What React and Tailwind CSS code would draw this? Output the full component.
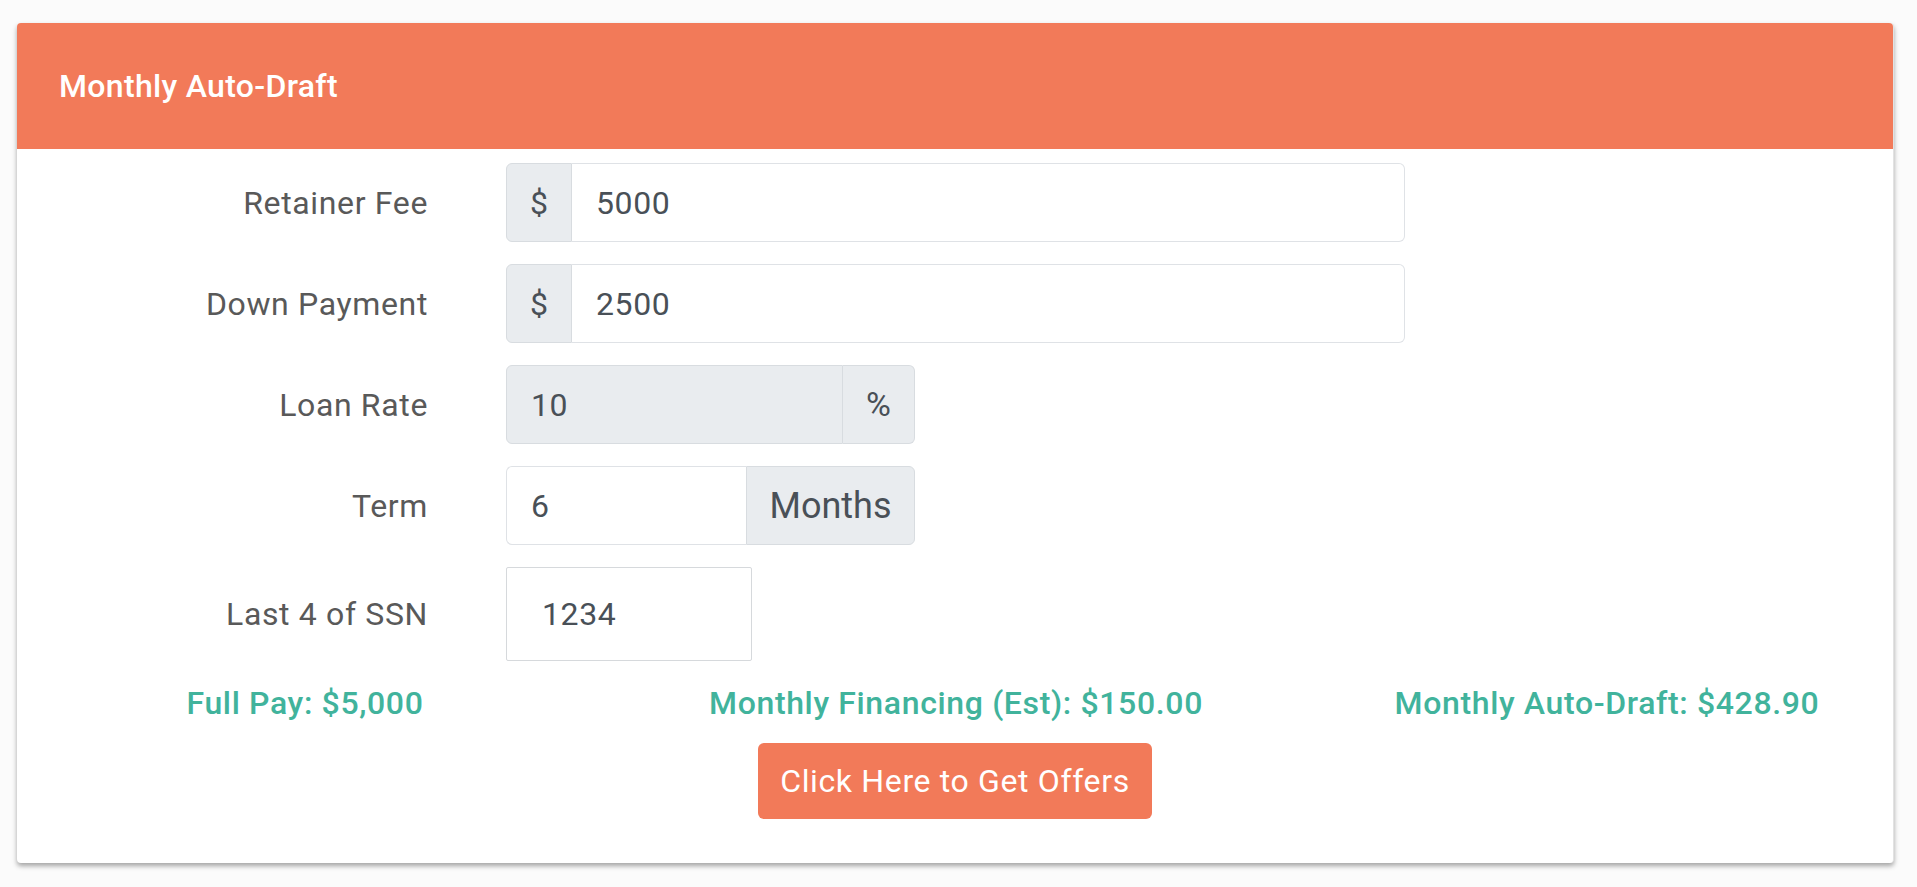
import React from 'react';

const font = "font-['Roboto','Liberation_Sans',sans-serif]";

const Label = ({ children }) => (
  <div className="w-[411px] shrink-0 text-right text-[32px] tracking-[0.02em] text-[#595959]">
    {children}
  </div>
);

const Row = ({ label, children }) => (
  <div className="flex items-center gap-[78px]">
    <Label>{label}</Label>
    {children}
  </div>
);

const DollarField = ({ value }) => (
  <div className="flex h-[79px] w-[899px]">
    <span className="flex w-[66px] items-center justify-center rounded-l-[6px] border border-[#d8dce0] bg-[#e9ecef] text-[32px] text-[#495057]">
      $
    </span>
    <div className="flex flex-1 items-center rounded-r-[6px] border border-l-0 border-[#dfe2e6] bg-white pl-[24px] text-[32px] tracking-[0.02em] text-[#495057]">
      {value}
    </div>
  </div>
);

const App = () => {
  return (
    <div className={`min-h-screen bg-[#fbfbfb] pl-[17px] pr-[23px] pt-[23px] ${font}`}>
      <div className="rounded-[4px] border-r border-[#e2e2e2] bg-white shadow-[0_3px_5px_rgba(0,0,0,0.35)]">
        {/* Header */}
        <div className="flex h-[126px] items-center rounded-t-[4px] bg-[#f27a59] pl-[42px] text-[32px] font-medium tracking-[0.01em] text-white">
          Monthly Auto-Draft
        </div>

        <div className="pb-[44px] pt-[14px]">
          {/* Fields */}
          <div className="flex flex-col gap-[22px]">
            <Row label="Retainer Fee">
              <DollarField value="5000" />
            </Row>
            <Row label="Down Payment">
              <DollarField value="2500" />
            </Row>
            <Row label="Loan Rate">
              <div className="flex h-[79px] w-[409px]">
                <div className="flex flex-1 items-center rounded-l-[6px] border border-[#d8dce0] bg-[#e9ecef] pl-[24px] text-[32px] tracking-[0.02em] text-[#495057]">
                  10
                </div>
                <span className="flex w-[72px] items-center justify-center rounded-r-[6px] border border-l-0 border-[#d8dce0] bg-[#e9ecef] text-[34px] text-[#495057]">
                  %
                </span>
              </div>
            </Row>
            <Row label="Term">
              <div className="flex h-[79px] w-[409px]">
                <div className="flex flex-1 items-center rounded-l-[6px] border border-r-0 border-[#dfe2e6] bg-white pl-[24px] text-[32px] tracking-[0.02em] text-[#495057]">
                  6
                </div>
                <span className="flex w-[169px] items-center justify-center rounded-r-[6px] border border-[#d8dce0] bg-[#e9ecef] text-[36px] text-[#495057]">
                  Months
                </span>
              </div>
            </Row>
            <Row label="Last 4 of SSN">
              <div className="flex h-[94px] w-[246px] items-center rounded-[2px] border border-[#d6d9dc] bg-white pl-[35px] text-[32px] tracking-[0.02em] text-[#495057]">
                1234
              </div>
            </Row>
          </div>

          {/* Summary */}
          <div className="ml-[8px] mt-[24px] grid grid-cols-[560px_560px_560px] gap-x-[91px] text-center text-[32px] font-medium leading-[36px] tracking-[0.02em] text-[#41b39c]">
            <div>Full Pay: $5,000</div>
            <div>Monthly Financing (Est): $150.00</div>
            <div>Monthly Auto-Draft: $428.90</div>
          </div>

          <div className="mt-[22px] flex justify-center">
            <button className="h-[76px] w-[394px] rounded-[6px] bg-[#f27a59] text-[32px] tracking-[0.02em] text-white">
              Click Here to Get Offers
            </button>
          </div>
        </div>
      </div>
    </div>
  );
};

export default App;
